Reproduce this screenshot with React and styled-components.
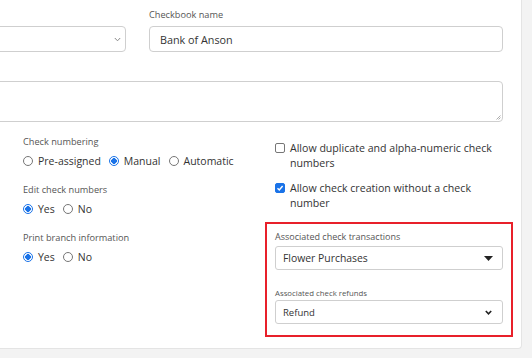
import React from 'react';
import styled, { createGlobalStyle } from 'styled-components';

const GlobalStyle = createGlobalStyle`
    html, body {
        margin: 0;
        padding: 0;
        background: #f3f3f3;
        font-family: 'Open Sans', 'Noto Sans', sans-serif;
        color: #333;
    }
`;

const Page = styled.div`
    width: 532px;
    height: 358px;
    overflow: hidden;
    background: #f3f3f3;
`;

const Card = styled.div`
    width: 522px;
    height: 349px;
    box-sizing: border-box;
    background: #fff;
    border-right: 1px solid #e4e4e4;
    border-bottom: 1px solid #e4e4e4;
    border-bottom-right-radius: 4px;
    overflow: hidden;
`;

const Form = styled.div`
    margin-left: -40px;
    padding: 8px 18px 0 0;
    display: flex;
    flex-direction: column;
`;

const TopRow = styled.div`
    display: grid;
    grid-template-columns: 166px 1fr;
    column-gap: 23px;
    align-items: end;
`;

const Field = styled.div`
    display: flex;
    flex-direction: column;
`;

const Label = styled.div`
    font-size: ${p => p.size || 9.2}px;
    line-height: ${p => p.lh || 14}px;
    color: #555;
    margin-bottom: ${p => p.mb ?? 4}px;
    margin-top: ${p => p.mt || 0}px;
`;

const Box = styled.div`
    height: ${p => p.h || 26}px;
    box-sizing: border-box;
    border: 1px solid #cfcfcf;
    border-radius: ${p => p.r || 4}px;
    background: #fff;
    display: flex;
    align-items: center;
    justify-content: space-between;
    padding: 0 ${p => p.pr || 9}px 0 ${p => p.pl || 10}px;
    font-size: ${p => p.fs || 10.8}px;
    color: #333;
    position: relative;
`;

const TextArea = styled(Box)`
    margin-top: 29px;
    height: 41px;
`;

const Grip = styled.svg`
    position: absolute;
    right: 1px;
    bottom: 1px;
`;

const Bottom = styled.div`
    display: grid;
    grid-template-columns: 252px 1fr;
    padding-left: 63px;
    margin-top: 13px;
`;

const Column = styled.div`
    display: flex;
    flex-direction: column;
    gap: ${p => p.gap}px;
    padding-top: ${p => p.pt || 0}px;
`;

const Options = styled.div`
    display: flex;
    align-items: center;
    height: 16px;
    gap: 8px;
    font-size: 10.5px;
    color: #333;
`;

const Option = styled.label`
    display: flex;
    align-items: center;
    gap: 5px;
`;

const Radio = styled.span`
    width: 10px;
    height: 10px;
    box-sizing: border-box;
    border-radius: 50%;
    border: 1px solid ${p => (p.on ? '#1a73e8' : '#767676')};
    background: ${p => (p.on ? 'radial-gradient(circle, #1a73e8 0 2.6px, #fff 3px)' : '#fff')};
    flex: none;
`;

const CheckRow = styled.div`
    display: flex;
    align-items: flex-start;
    gap: 5px;
    font-size: 10.6px;
    line-height: 15px;
    color: #333;
`;

const Check = styled.span`
    width: 10px;
    height: 10px;
    margin-top: 2px;
    box-sizing: border-box;
    border-radius: 2px;
    border: 1px solid ${p => (p.on ? '#1a73e8' : '#767676')};
    background: ${p => (p.on ? '#1a73e8' : '#fff')};
    display: flex;
    align-items: center;
    justify-content: center;
    flex: none;
`;

const Highlight = styled.div`
    margin: 1px -10px 0;
    border: 2px solid #e8202a;
    padding: 7px 8px 11px;
    display: flex;
    flex-direction: column;
`;

const Chevron = ({ color = '#888', w = 1 }) => (
    <svg width="7" height="5" viewBox="0 0 7 5">
        <path d="M0.8 1 L3.5 3.8 L6.2 1" fill="none" stroke={color} strokeWidth={w} />
    </svg>
);

const Caret = () => (
    <svg width="9" height="5" viewBox="0 0 9 5">
        <path d="M0 0 H9 L4.5 5 Z" fill="#222" />
    </svg>
);

function RadioGroup({ label, options, value }) {
    return (
        <div>
            <Label>{label}</Label>
            <Options>
                {options.map(o => (
                    <Option key={o}>
                        <Radio on={o === value} />
                        {o}
                    </Option>
                ))}
            </Options>
        </div>
    );
}

export default function App() {
    return (
        <Page>
            <GlobalStyle />
            <Card>
                <Form>
                    <TopRow>
                        <Box pr={4}>
                            <span />
                            <Chevron />
                        </Box>
                        <Field>
                            <Label>Checkbook name</Label>
                            <Box>Bank of Anson</Box>
                        </Field>
                    </TopRow>
                    <TextArea>
                        <Grip width="5" height="5" viewBox="0 0 5 5">
                            <path d="M0.5 4.5 L4.5 0.5 M2.5 4.5 L4.5 2.5" stroke="#999" strokeWidth="0.8" />
                        </Grip>
                    </TextArea>
                    <Bottom>
                        <Column gap={14}>
                            <RadioGroup
                                label="Check numbering"
                                options={['Pre-assigned', 'Manual', 'Automatic']}
                                value="Manual"
                            />
                            <RadioGroup label="Edit check numbers" options={['Yes', 'No']} value="Yes" />
                            <RadioGroup label="Print branch information" options={['Yes', 'No']} value="Yes" />
                        </Column>
                        <Column gap={10} pt={6}>
                            <CheckRow>
                                <Check />
                                <span>Allow duplicate and alpha-numeric check numbers</span>
                            </CheckRow>
                            <CheckRow>
                                <Check on>
                                    <svg width="8" height="8" viewBox="0 0 8 8">
                                        <path d="M1.5 4.2 L3.3 6 L6.6 2" fill="none" stroke="#fff" strokeWidth="1.4" />
                                    </svg>
                                </Check>
                                <span>Allow check creation without a check number</span>
                            </CheckRow>
                            <Highlight>
                                <Label size={9} lh={12} mb={3}>Associated check transactions</Label>
                                <Box h={24} r={3} fs={10.4} pl={7} pr={9}>
                                    Flower Purchases
                                    <Caret />
                                </Box>
                                <Label size={7.8} lh={12} mb={1} mt={17}>
                                    Associated check refunds
                                </Label>
                                <Box h={24} r={3} fs={9.5} pl={7} pr={10}>
                                    Refund
                                    <Chevron color="#222" w={1.6} />
                                </Box>
                            </Highlight>
                        </Column>
                    </Bottom>
                </Form>
            </Card>
        </Page>
    );
}
